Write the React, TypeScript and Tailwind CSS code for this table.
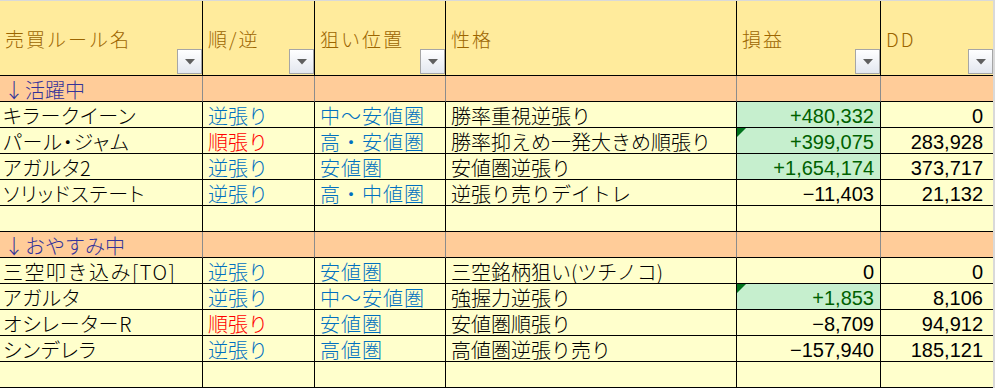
import React from "react"

interface Rule {
  name: string
  dir: string
  pos: string
  desc: string
  pl: string
  dd: string
  good?: boolean
  mark?: boolean
  kana?: boolean
}

const active: Rule[] = [
  { name: "キラークイーン", dir: "逆張り", pos: "中〜安値圏", desc: "勝率重視逆張り", pl: "+480,332", dd: "0", good: true, kana: true },
  { name: "パール・ジャム", dir: "順張り", pos: "高・安値圏", desc: "勝率抑えめ一発大きめ順張り", pl: "+399,075", dd: "283,928", good: true, mark: true, kana: true },
  { name: "アガルタ2", dir: "逆張り", pos: "安値圏", desc: "安値圏逆張り", pl: "+1,654,174", dd: "373,717", good: true, kana: true },
  { name: "ソリッドステート", dir: "逆張り", pos: "高・中値圏", desc: "逆張り売りデイトレ", pl: "−11,403", dd: "21,132", kana: true },
]

const resting: Rule[] = [
  { name: "三空叩き込み[TO]", dir: "逆張り", pos: "安値圏", desc: "三空銘柄狙い(ツチノコ)", pl: "0", dd: "0" },
  { name: "アガルタ", dir: "逆張り", pos: "中〜安値圏", desc: "強握力逆張り", pl: "+1,853", dd: "8,106", good: true, mark: true, kana: true },
  { name: "オシレーターR", dir: "順張り", pos: "安値圏", desc: "安値圏順張り", pl: "−8,709", dd: "94,912", kana: true },
  { name: "シンデレラ", dir: "逆張り", pos: "高値圏", desc: "高値圏逆張り売り", pl: "−157,940", dd: "185,121", kana: true },
]

const headers = ["売買ルール名", "順/逆", "狙い位置", "性格", "損益", "DD"]

// excel style filter button
function FilterButton() {
  return (
    <div className="absolute right-0 bottom-[1px] w-[25px] h-[25px] border border-[#a6a6a6] bg-linear-to-b from-white to-[#e3e7ef] flex items-center justify-center">
      <svg width="10" height="6" viewBox="0 0 10 6">
        <polygon points="0,0 10,0 5,5.5" fill="#5f5f5f" />
      </svg>
    </div>
  )
}

function CommentMark() {
  return (
    <svg className="absolute top-0 left-0" width="9" height="9" viewBox="0 0 9 9">
      <polygon points="0,0 9,0 0,9" fill="#00721c" />
    </svg>
  )
}

function SectionRow({ label }: { label: string }) {
  return (
    <>
      <div className="h-[26px] border-b border-r border-b-black border-r-[#8c8c8c] bg-[#ffcc99] text-[#333399] text-[20px] leading-[22px] pl-[3px] pt-[2px] flex items-center whitespace-nowrap">
        <span className="inline-block w-[22px] text-center">↓</span>
        {label}
      </div>
      <div className="h-[26px] border-b border-r border-b-black border-r-[#8c8c8c] bg-[#ffcc99]" />
      <div className="h-[26px] border-b border-r border-b-black border-r-[#8c8c8c] bg-[#ffcc99]" />
      <div className="h-[26px] border-b border-r border-b-black border-r-[#8c8c8c] bg-[#ffcc99]" />
      <div className="h-[26px] border-b border-r border-b-black border-r-[#8c8c8c] bg-[#ffcc99]" />
      <div className="h-[26px] border-b border-b-black bg-[#ffcc99]" />
    </>
  )
}

function DataRow({ r }: { r: Rule }) {
  const dirColor = r.dir === "順張り" ? "text-[#ff0000]" : "text-[#0070c0]"
  return (
    <>
      <div
        className={`h-[26px] border-b border-r border-black bg-[#ffffcc] text-[20px] leading-[22px] pl-[3px] pt-[2px] flex items-center whitespace-nowrap ${
          r.kana ? "[font-feature-settings:'palt'] tracking-[0.8px]" : "tracking-[1.5px]"
        }`}
      >
        {r.name}
      </div>
      <div className={`h-[26px] border-b border-r border-black bg-[#ffffcc] text-[20px] leading-[22px] pl-[5px] pt-[2px] flex items-center whitespace-nowrap ${dirColor}`}>
        {r.dir}
      </div>
      <div className="h-[26px] border-b border-r border-black bg-[#ffffcc] text-[#0070c0] text-[20px] leading-[22px] tracking-[1px] pl-[5px] pt-[2px] flex items-center whitespace-nowrap">
        {r.pos}
      </div>
      <div className="h-[26px] border-b border-r border-black bg-[#ffffcc] text-[20px] leading-[22px] pl-[5px] pt-[2px] flex items-center whitespace-nowrap">
        {r.desc}
      </div>
      <div
        className={`relative h-[26px] border-b border-r border-black text-[20px] leading-[22px] pr-[6px] pt-[2px] flex items-center justify-end whitespace-nowrap font-['Liberation_Sans',sans-serif] ${
          r.good ? "bg-[#c6efce] text-[#006100]" : "bg-[#ffffcc]"
        }`}
      >
        {r.mark && <CommentMark />}
        {r.pl}
      </div>
      <div className="h-[26px] border-b border-black bg-[#ffffcc] text-[20px] leading-[22px] pr-[10px] pt-[2px] flex items-center justify-end whitespace-nowrap font-['Liberation_Sans',sans-serif]">
        {r.dd}
      </div>
    </>
  )
}

function EmptyRow() {
  return (
    <>
      <div className="h-[26px] border-b border-r border-black bg-[#ffffcc]" />
      <div className="h-[26px] border-b border-r border-black bg-[#ffffcc]" />
      <div className="h-[26px] border-b border-r border-black bg-[#ffffcc]" />
      <div className="h-[26px] border-b border-r border-black bg-[#ffffcc]" />
      <div className="h-[26px] border-b border-r border-black bg-[#ffffcc]" />
      <div className="h-[26px] border-b border-black bg-[#ffffcc]" />
    </>
  )
}

export default function App() {
  return (
    <div className="w-[995px] h-[388px] overflow-hidden bg-[#d9d9d9] pt-[1px] pr-[2px] text-black font-light font-['Noto_Sans_CJK_JP',sans-serif]">
      <div className="grid grid-cols-[203px_112px_131px_291px_144px_112px]">
        {headers.map((h, i) => (
          <div
            key={h}
            className={`relative h-[75px] border-b border-black bg-[#ffeb9c] text-[#9c6500] text-[19px] leading-[22px] tracking-[2px] pl-[5px] pt-[2px] flex items-center whitespace-nowrap ${
              i < 5 ? "border-r" : ""
            }`}
          >
            {h}
            {i !== 3 && <FilterButton />}
          </div>
        ))}

        <SectionRow label="活躍中" />
        {active.map((r) => (
          <DataRow key={r.name} r={r} />
        ))}
        <EmptyRow />

        <SectionRow label="おやすみ中" />
        {resting.map((r) => (
          <DataRow key={r.name} r={r} />
        ))}
        <EmptyRow />
      </div>
    </div>
  )
}
